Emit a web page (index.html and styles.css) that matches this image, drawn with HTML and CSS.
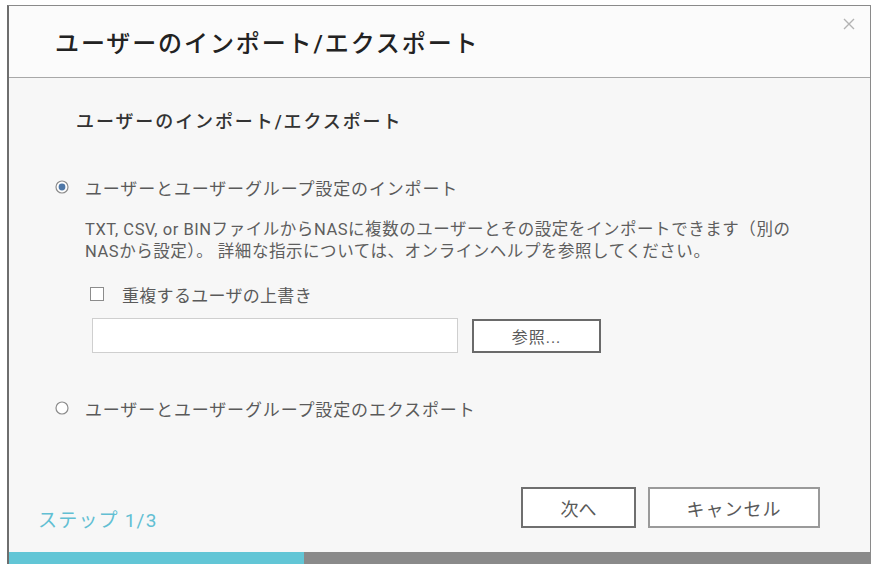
FILE: index.html
```html
<html>

<head>
  <link rel="stylesheet" href="styles.css">
</head>

<body>
  <div class="dialog">
    <!-- Header -->
    <div class="dialog-header">
      <h1 class="dialog-title">ユーザーのインポート/エクスポート</h1>
      <span class="dialog-close">
        <svg width="12" height="12" viewBox="0 0 12 12"><path d="M1 1 L11 11 M11 1 L1 11" stroke="#b3b3b3" stroke-width="1.4" fill="none"/></svg>
      </span>
    </div>

    <!-- Body -->
    <div class="dialog-body">
      <h2 class="section-title">ユーザーのインポート/エクスポート</h2>

      <div class="radio-row first">
        <svg class="radio-icon" width="14" height="14" viewBox="0 0 14 14"><circle cx="7" cy="7" r="6" fill="#fff" stroke="#8c8c8c" stroke-width="1.2"/><circle cx="7" cy="7" r="3.4" fill="#4f78a8"/></svg>
        <span class="radio-label">ユーザーとユーザーグループ設定のインポート</span>
      </div>

      <div class="option-detail">
        <p class="description">TXT, CSV, or BINファイルからNASに複数のユーザーとその設定をインポートできます（別の<br>NASから設定）。 詳細な指示については、オンラインヘルプを参照してください。</p>

        <div class="check-row">
          <span class="checkbox"></span>
          <span class="check-label">重複するユーザの上書き</span>
        </div>

        <div class="file-row">
          <div class="file-input"></div>
          <button class="btn btn-browse">参照...</button>
        </div>
      </div>

      <div class="radio-row second">
        <svg class="radio-icon" width="14" height="14" viewBox="0 0 14 14"><circle cx="7" cy="7" r="6" fill="#fff" stroke="#8c8c8c" stroke-width="1.2"/></svg>
        <span class="radio-label">ユーザーとユーザーグループ設定のエクスポート</span>
      </div>

      <!-- Footer -->
      <div class="dialog-footer">
        <span class="step-text">ステップ 1/3</span>
        <div class="footer-buttons">
          <button class="btn btn-next">次へ</button>
          <button class="btn btn-cancel">キャンセル</button>
        </div>
      </div>
    </div>

    <div class="progress">
      <div class="progress-done" style="width: 295px;"></div>
      <div class="progress-rest"></div>
    </div>
  </div>
</body>

</html>
```

FILE: styles.css
```css
body {
  margin: 0;
  background-color: #ffffff;
  font-family: Roboto, "Noto Sans CJK JP", sans-serif;
  color: #5a5a5a;
}

.dialog {
  box-sizing: border-box;
  margin: 5px 0 0 7px;
  width: 864px;
  height: 559px;
  border: 1px solid #8a8a8a;
  border-left: 2px solid #6e6e6e;
  border-bottom: none;
  background-color: #f7f7f7;
  display: flex;
  flex-direction: column;
}

.dialog-header {
  position: relative;
  box-sizing: border-box;
  height: 72px;
  border-bottom: 1px solid #a8a8a8;
  background-color: #fbfbfb;
  display: flex;
  align-items: center;
  padding-left: 46px;
}

.dialog-title {
  margin: 0;
  font-size: 24px;
  font-weight: 500;
  color: #222222;
  letter-spacing: 1.9px;
}

.dialog-close {
  position: absolute;
  top: 12px;
  right: 15px;
  line-height: 0;
}

.dialog-body {
  flex: 1;
  display: flex;
  flex-direction: column;
  padding-left: 46px;
}

.section-title {
  margin: 32px 0 0 21px;
  font-size: 18px;
  line-height: 24px;
  font-weight: 500;
  color: #333333;
  letter-spacing: 1.9px;
}

.radio-row {
  display: flex;
  align-items: center;
  height: 24px;
}

.radio-row.first {
  margin-top: 41px;
}

.radio-row.second {
  margin-top: 43px;
}

.radio-icon {
  flex: none;
}

.radio-label {
  margin-left: 16px;
  font-size: 17px;
  letter-spacing: 0.85px;
  color: #5a5a5a;
}

.option-detail {
  padding-left: 30px;
}

.description {
  margin: 20px 0 0 0;
  font-size: 16.5px;
  line-height: 22px;
  color: #5e5e5e;
  letter-spacing: 0.55px;
}

.check-row {
  display: flex;
  align-items: center;
  height: 24px;
  margin: 19px 0 0 5px;
}

.checkbox {
  box-sizing: border-box;
  width: 14px;
  height: 14px;
  border: 1px solid #8c8c8c;
  background-color: #ffffff;
}

.check-label {
  margin-left: 18px;
  font-size: 17px;
  letter-spacing: 0.3px;
  color: #5a5a5a;
}

.file-row {
  display: flex;
  align-items: center;
  margin: 12px 0 0 7px;
}

.file-input {
  box-sizing: border-box;
  width: 366px;
  height: 35px;
  border: 1px solid #cfcfcf;
  background-color: #ffffff;
}

.btn {
  box-sizing: border-box;
  background-color: #ffffff;
  font-family: Roboto, "Noto Sans CJK JP", sans-serif;
  color: #5a5a5a;
  padding: 0;
  cursor: pointer;
}

.btn-browse {
  margin-left: 14px;
  width: 129px;
  height: 34px;
  border: 2px solid #6a6a6a;
  font-size: 16px;
  letter-spacing: 1px;
}

.dialog-footer {
  margin-top: auto;
  display: flex;
  justify-content: space-between;
  align-items: flex-end;
  padding: 0 50px 19px 0;
  margin-left: -17px;
}

.step-text {
  font-size: 19px;
  line-height: 24px;
  letter-spacing: 1.2px;
  color: #62bfd3;
}

.footer-buttons {
  display: flex;
  gap: 12px;
  margin-bottom: 5px;
}

.btn-next {
  width: 115px;
  height: 41px;
  border: 2px solid #6f6f6f;
  font-size: 18px;
}

.btn-cancel {
  width: 172px;
  height: 41px;
  border: 2px solid #9a9a9a;
  font-size: 18px;
  letter-spacing: 1px;
}

.progress {
  display: flex;
  height: 12px;
}

.progress-done {
  background-color: #62c6d6;
}

.progress-rest {
  flex: 1;
  background-color: #8a8a8a;
}
```
